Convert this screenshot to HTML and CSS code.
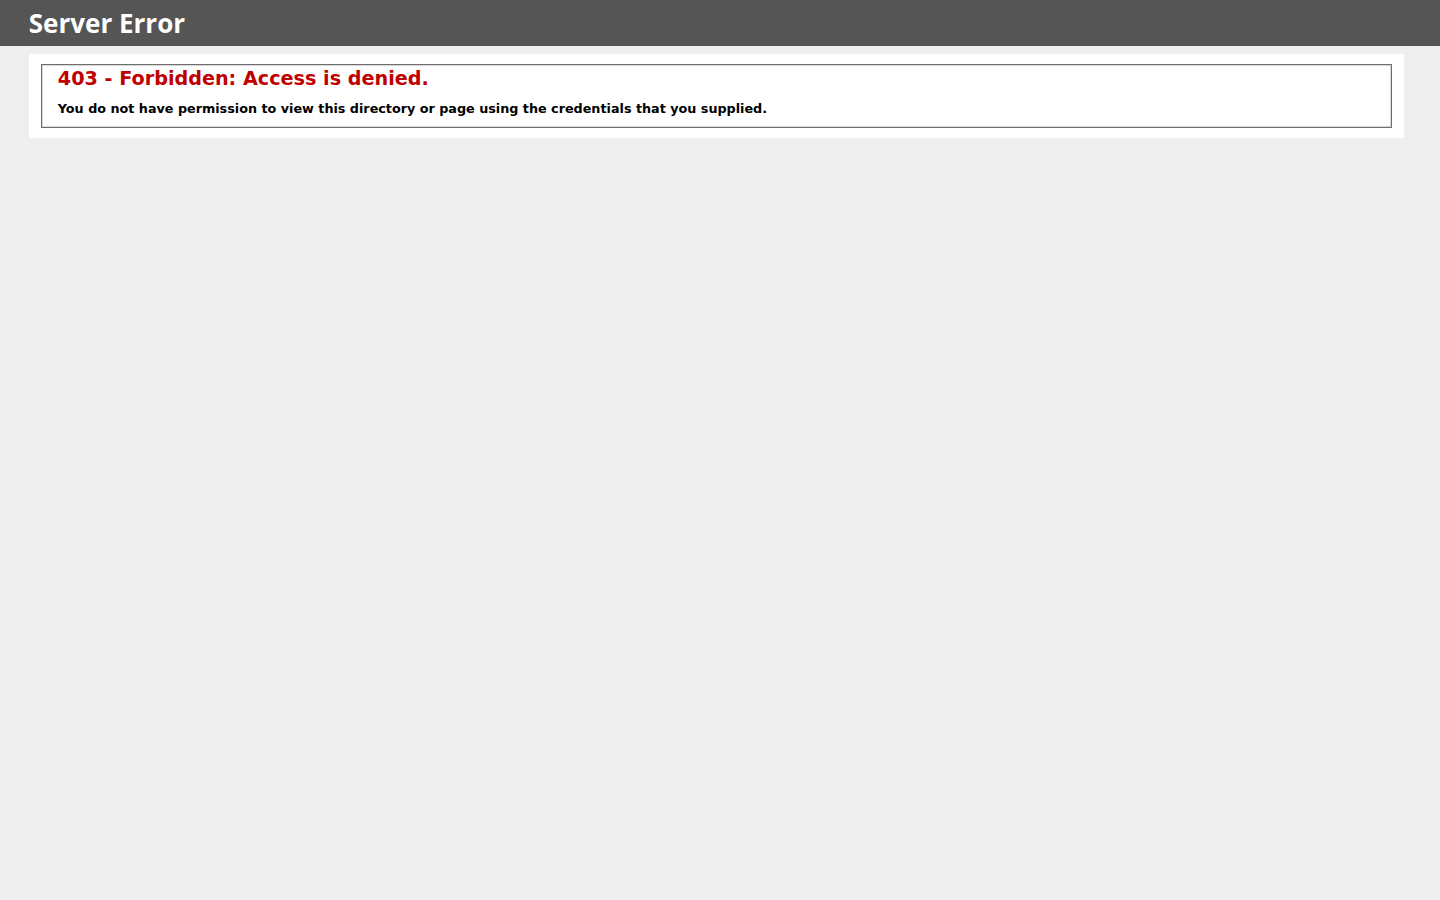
FILE: index.html
```html
<!DOCTYPE html>
<html>
<head>
<meta charset="utf-8">
<title>403 - Forbidden: Access is denied.</title>
<link rel="stylesheet" href="styles.css">
</head>
<body>
<div class="header"><h1>Server Error</h1></div>
<div class="content">
 <div class="content-container"><fieldset>
  <h2>403 - Forbidden: Access is denied.</h2>
  <h3>You do not have permission to view this directory or page using the credentials that you supplied.</h3>
 </fieldset></div>
</div>
</body>
</html>
```
FILE: styles.css
```css
body {
  margin: 0;
  font-size: 0.7em;
  font-family: "DejaVu Sans", Verdana, sans-serif;
  background: #eeeeee;
}
fieldset {
  padding: 2px 16px 10px 16px;
  margin: 0 2px;
  border: 1px solid #6e6e6e;
  box-shadow: inset 0 0 0 1px #d8d8d8;
}
h1 {
  font-size: 26px;
  line-height: 34px;
  margin: 0;
  color: #fff;
}
h2 {
  font-size: 19.2px;
  line-height: 24px;
  margin: 0;
  color: #c00000;
}
h3 {
  font-size: 12.75px;
  line-height: 16px;
  margin: 10px 0 0 0;
  color: #000000;
}
.header {
  width: 96%;
  padding: 6px 2%;
  font-family: "Open Sans", "Trebuchet MS", sans-serif;
  color: #fff;
  background-color: #555555;
}
.content {
  margin: 0 0 0 2%;
}
.content-container {
  background: #fff;
  width: 96%;
  margin-top: 8px;
  padding: 10px;
}
```
